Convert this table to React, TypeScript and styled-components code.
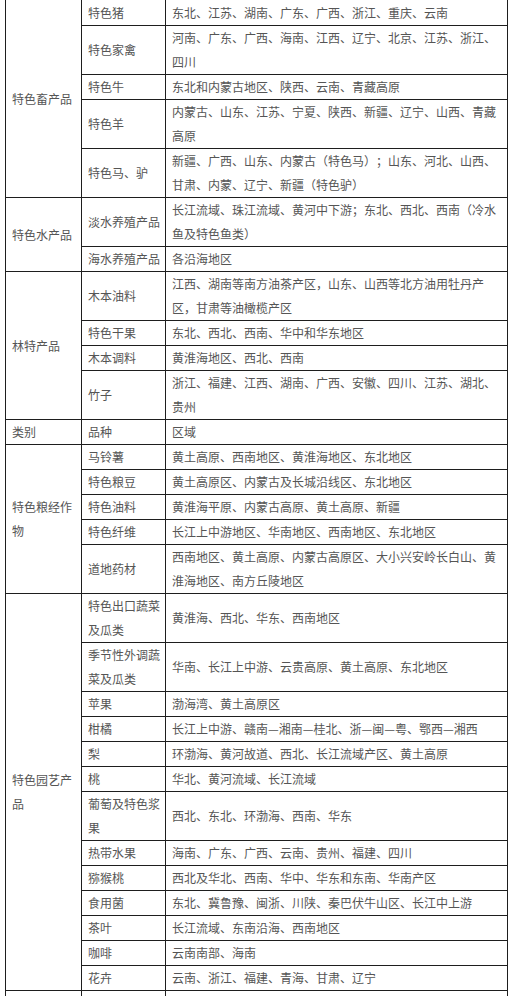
import { createGlobalStyle } from 'styled-components'
import styled from 'styled-components'

const GlobalStyle = createGlobalStyle`
  html, body {
    margin: 0;
    padding: 0;
    background: #fff;
  }
  body {
    font-family: 'Noto Sans CJK SC', 'Noto Sans', sans-serif;
  }
`

const Page = styled.div`
  width: 515px;
  height: 996px;
  overflow: hidden;
  padding-left: 5px;
  box-sizing: border-box;
`

const Sheet = styled.table`
  width: 503px;
  table-layout: fixed;
  border-collapse: collapse;
  font-size: 12px;
  line-height: 24px;
  color: #555;
  text-spacing-trim: space-all;
  font-feature-settings: 'halt' 0, 'chws' 0;

  tr:first-child td {
    border-top-color: transparent;
  }
`

const Cell = styled.td`
  border: 1px solid #1e1e1e;
  padding: 0 4px 0 6px;
  vertical-align: middle;
  text-align: left;
  word-break: break-all;
`

const GroupCell = styled(Cell)``

const KindCell = styled(Cell)``

const AreaCell = styled(Cell)`
  padding-left: 6px;
`

type Item = { kind: string; area: string }
type Group = { name: string; items: Item[] }

const before: Group[] = [
  {
    name: '特色畜产品',
    items: [
      { kind: '特色猪', area: '东北、江苏、湖南、广东、广西、浙江、重庆、云南' },
      { kind: '特色家禽', area: '河南、广东、广西、海南、江西、辽宁、北京、江苏、浙江、四川' },
      { kind: '特色牛', area: '东北和内蒙古地区、陕西、云南、青藏高原' },
      { kind: '特色羊', area: '内蒙古、山东、江苏、宁夏、陕西、新疆、辽宁、山西、青藏高原' },
      {
        kind: '特色马、驴',
        area: '新疆、广西、山东、内蒙古（特色马）；山东、河北、山西、甘肃、内蒙、辽宁、新疆（特色驴）',
      },
    ],
  },
  {
    name: '特色水产品',
    items: [
      { kind: '淡水养殖产品', area: '长江流域、珠江流域、黄河中下游；东北、西北、西南（冷水鱼及特色鱼类）' },
      { kind: '海水养殖产品', area: '各沿海地区' },
    ],
  },
  {
    name: '林特产品',
    items: [
      { kind: '木本油料', area: '江西、湖南等南方油茶产区，山东、山西等北方油用牡丹产区，甘肃等油橄榄产区' },
      { kind: '特色干果', area: '东北、西北、西南、华中和华东地区' },
      { kind: '木本调料', area: '黄淮海地区、西北、西南' },
      { kind: '竹子', area: '浙江、福建、江西、湖南、广西、安徽、四川、江苏、湖北、贵州' },
    ],
  },
]

const after: Group[] = [
  {
    name: '特色粮经作物',
    items: [
      { kind: '马铃薯', area: '黄土高原、西南地区、黄淮海地区、东北地区' },
      { kind: '特色粮豆', area: '黄土高原区、内蒙古及长城沿线区、东北地区' },
      { kind: '特色油料', area: '黄淮海平原、内蒙古高原、黄土高原、新疆' },
      { kind: '特色纤维', area: '长江上中游地区、华南地区、西南地区、东北地区' },
      { kind: '道地药材', area: '西南地区、黄土高原、内蒙古高原区、大小兴安岭长白山、黄淮海地区、南方丘陵地区' },
    ],
  },
  {
    name: '特色园艺产品',
    items: [
      { kind: '特色出口蔬菜及瓜类', area: '黄淮海、西北、华东、西南地区' },
      { kind: '季节性外调蔬菜及瓜类', area: '华南、长江上中游、云贵高原、黄土高原、东北地区' },
      { kind: '苹果', area: '渤海湾、黄土高原区' },
      { kind: '柑橘', area: '长江上中游、赣南—湘南—桂北、浙—闽—粤、鄂西—湘西' },
      { kind: '梨', area: '环渤海、黄河故道、西北、长江流域产区、黄土高原' },
      { kind: '桃', area: '华北、黄河流域、长江流域' },
      { kind: '葡萄及特色浆果', area: '西北、东北、环渤海、西南、华东' },
      { kind: '热带水果', area: '海南、广东、广西、云南、贵州、福建、四川' },
      { kind: '猕猴桃', area: '西北及华北、西南、华中、华东和东南、华南产区' },
      { kind: '食用菌', area: '东北、冀鲁豫、闽浙、川陕、秦巴伏牛山区、长江中上游' },
      { kind: '茶叶', area: '长江流域、东南沿海、西南地区' },
      { kind: '咖啡', area: '云南南部、海南' },
      { kind: '花卉', area: '云南、浙江、福建、青海、甘肃、辽宁' },
    ],
  },
]

const renderGroup = (g: Group) =>
  g.items.map((item, i) => (
    <tr key={g.name + item.kind}>
      {i === 0 && <GroupCell rowSpan={g.items.length}>{g.name}</GroupCell>}
      <KindCell>{item.kind}</KindCell>
      <AreaCell>{item.area}</AreaCell>
    </tr>
  ))

export default function App() {
  return (
    <Page>
      <GlobalStyle />
      <Sheet>
        <colgroup>
          <col style={{ width: '76px' }} />
          <col style={{ width: '84px' }} />
          <col />
        </colgroup>
        <tbody>
          {before.map(renderGroup)}
          <tr>
            <GroupCell>类别</GroupCell>
            <KindCell>品种</KindCell>
            <AreaCell>区域</AreaCell>
          </tr>
          {after.map(renderGroup)}
          <tr>
            <GroupCell>&nbsp;</GroupCell>
            <KindCell>&nbsp;</KindCell>
            <AreaCell>&nbsp;</AreaCell>
          </tr>
        </tbody>
      </Sheet>
    </Page>
  )
}
